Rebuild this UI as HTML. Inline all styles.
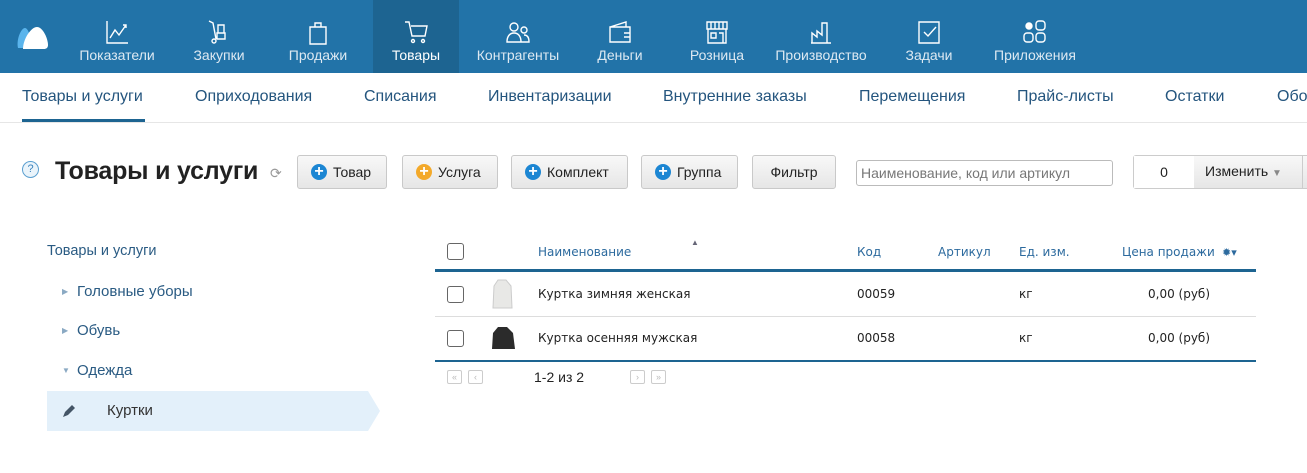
<!DOCTYPE html>
<html><head><meta charset="utf-8"><style>
*{margin:0;padding:0;box-sizing:border-box}
body{width:1307px;height:473px;overflow:hidden;background:#fff;font-family:"Liberation Sans",sans-serif;position:relative}
.a{position:absolute;white-space:nowrap}
#top{position:absolute;left:0;top:0;width:1307px;height:73px;background:#2273a8}
.ni{position:absolute;top:0;height:73px;text-align:center;color:#dde9f2;font-size:14px}
.ni span{position:absolute;left:0;right:0;top:47px}
.ni svg{position:absolute;top:19px;left:50%;margin-left:-13px}
.sub{position:absolute;top:88px;font-size:16px;color:#24557e}
.btn{position:absolute;top:155px;height:34px;border:1px solid #c9c9c9;border-radius:3px;background:linear-gradient(#f8f8f8,#e6e6e6);font-size:14px;color:#222;line-height:32px;display:flex;align-items:center}
.pl{display:inline-block;width:16px;height:16px;border-radius:50%;background:#1c86d3;color:#fff;font-weight:bold;font-size:16px;line-height:16px;text-align:center;margin-right:6px}
.cb{position:absolute;left:447px;width:17px;height:17px;border:1.5px solid #666;border-radius:3px}
.th{position:absolute;top:245px;font-family:"DejaVu Sans",sans-serif;font-size:12px;color:#2c6a9e}
.td{position:absolute;font-family:"DejaVu Sans",sans-serif;font-size:12px;color:#222}
.tr{position:absolute;left:47px;font-size:15px;color:#2a5b83}
.ar{position:absolute;left:62px;color:#8aa9c3;font-size:8px}
.pg{position:absolute;top:370px;width:15px;height:14px;border:1px solid #ccc;border-radius:2px;color:#bbb;font-size:9px;text-align:center;line-height:12px}
</style></head><body>
<div id="top">
<svg class="a" style="left:16px;top:24px" width="34" height="26" viewBox="0 0 34 26"><path d="M2 24C0 16 5 4 9 4c3 0 5 8 5 8L9 24z" fill="#5ab4ec"/><path d="M7 25C7 15 15 3 21 3s11 12 11 18c0 3-2 4-4 4z" fill="#fff"/></svg>
<div class="ni" style="left:76px;width:82px"><svg width="26" height="26" fill="none" stroke="#fff" stroke-width="1.4"><path d="M3 2v22h21M6 19l5-8 4 5 7-10M19 6h3v3"/></svg><span>Показатели</span></div>
<div class="ni" style="left:180px;width:78px"><svg width="26" height="26" fill="none" stroke="#fff" stroke-width="1.4"><path d="M3 2l4 2 3 16M12 6h6v8h-6zM11 14h8v6h-8z"/><circle cx="8" cy="22" r="2"/></svg><span>Закупки</span></div>
<div class="ni" style="left:278px;width:80px"><svg width="26" height="26" fill="none" stroke="#fff" stroke-width="1.4"><path d="M5 8h16v17H5zM10 8V4h6v4"/></svg><span>Продажи</span></div>
<div class="ni" style="left:373px;width:86px;background:#1d6491;color:#fff"><svg width="26" height="26" fill="none" stroke="#fff" stroke-width="1.4"><path d="M2 3h4l3 14h13l2-10H8"/><circle cx="10" cy="22" r="1.5"/><circle cx="20" cy="22" r="1.5"/></svg><span>Товары</span></div>
<div class="ni" style="left:473px;width:90px"><svg width="26" height="26" fill="none" stroke="#fff" stroke-width="1.4"><circle cx="9" cy="8" r="4"/><circle cx="19" cy="11" r="3"/><path d="M2 23c0-6 3-9 7-9s7 3 7 9zM16 23h8c0-5-2-7-5-7"/></svg><span>Контрагенты</span></div>
<div class="ni" style="left:585px;width:70px"><svg width="26" height="26" fill="none" stroke="#fff" stroke-width="1.4"><path d="M3 8h20v15H3zM3 8l16-5v5M17 14h6v4h-6"/></svg><span>Деньги</span></div>
<div class="ni" style="left:682px;width:70px"><svg width="26" height="26" fill="none" stroke="#fff" stroke-width="1.4"><path d="M3 3h20v7H3zM4 10v14h18V10M7 14h5v5H7zM15 14h4v10M7 3v7M11 3v7M15 3v7M19 3v7"/></svg><span>Розница</span></div>
<div class="ni" style="left:771px;width:100px"><svg width="26" height="26" fill="none" stroke="#fff" stroke-width="1.4"><path d="M4 24V14l5 4v-6l5 4V4h5v20zM3 24h20"/></svg><span>Производство</span></div>
<div class="ni" style="left:894px;width:70px"><svg width="26" height="26" fill="none" stroke="#fff" stroke-width="1.4"><path d="M3 3h20v21H3zM8 13l4 4 8-9"/></svg><span>Задачи</span></div>
<div class="ni" style="left:990px;width:90px"><svg width="26" height="26" fill="none" stroke="#fff" stroke-width="1.4"><circle cx="7" cy="7" r="3" fill="#fff"/><rect x="14" y="2" width="9" height="9" rx="3"/><rect x="2" y="14" width="9" height="9" rx="3"/><rect x="14" y="14" width="9" height="9" rx="3"/></svg><span>Приложения</span></div>
</div>
<div class="sub" style="left:22px">Товары и услуги</div>
<div class="a" style="left:22px;top:119px;width:123px;height:3px;background:#1d6491"></div>
<div class="sub" style="left:195px">Оприходования</div>
<div class="sub" style="left:364px">Списания</div>
<div class="sub" style="left:488px">Инвентаризации</div>
<div class="sub" style="left:663px">Внутренние заказы</div>
<div class="sub" style="left:859px">Перемещения</div>
<div class="sub" style="left:1017px">Прайс-листы</div>
<div class="sub" style="left:1165px">Остатки</div>
<div class="sub" style="left:1277px">Обо</div>
<div class="a" style="left:0;top:122px;width:1307px;height:1px;background:#e6e6e6"></div>

<div class="a" style="left:22px;top:161px;width:17px;height:17px;border:1px solid #5b9fd0;border-radius:50%;background:#eaf4fb;color:#3b83bd;font-size:11px;text-align:center;line-height:15px">?</div>
<div class="a" style="left:55px;top:157px;font-size:25px;font-weight:bold;color:#222;letter-spacing:-0.2px">Товары и услуги</div>
<div class="a" style="left:270px;top:165px;color:#999;font-size:14px">⟳</div>
<div class="btn" style="left:297px;width:90px;padding-left:13px"><span class="pl">+</span>Товар</div>
<div class="btn" style="left:402px;width:96px;padding-left:13px"><span class="pl" style="background:#f3a92a">+</span>Услуга</div>
<div class="btn" style="left:511px;width:117px;padding-left:13px"><span class="pl">+</span>Комплект</div>
<div class="btn" style="left:641px;width:97px;padding-left:13px"><span class="pl">+</span>Группа</div>
<div class="btn" style="left:752px;width:84px;justify-content:center">Фильтр</div>
<div class="a" style="left:856px;top:160px;width:257px;height:26px;border:1px solid #bbb;border-radius:3px;font-size:14px;color:#777;padding:4px 4px;line-height:16px">Наименование, код или артикул</div>
<div class="a" style="left:1133px;top:155px;width:180px;height:34px;border:1px solid #ccc;border-radius:3px;background:linear-gradient(#f8f8f8,#e6e6e6)"></div>
<div class="a" style="left:1134px;top:156px;width:60px;height:32px;background:#fff;font-size:14px;line-height:32px;text-align:center;color:#222">0</div>
<div class="a" style="left:1205px;top:163px;font-size:14px;color:#222">Изменить <span style="color:#888;font-size:10px">▼</span></div>
<div class="a" style="left:1302px;top:155px;width:1px;height:34px;background:#ccc"></div>

<div class="tr" style="top:243px;font-size:14.5px">Товары и услуги</div>
<div class="ar" style="top:287px">▶</div><div class="tr" style="left:77px;top:283px">Головные уборы</div>
<div class="ar" style="top:326px">▶</div><div class="tr" style="left:77px;top:322px">Обувь</div>
<div class="ar" style="top:366px">▼</div><div class="tr" style="left:77px;top:362px">Одежда</div>
<svg class="a" style="left:47px;top:391px" width="334" height="40"><path d="M0 0H321L333 20 321 40H0z" fill="#e3f0fa"/><path d="M16 26l2-5 7-7 3 3-7 7z" fill="#456"/></svg>
<div class="tr" style="left:107px;top:402px;color:#333">Куртки</div>

<div class="cb" style="top:243px"></div>
<div class="a" style="left:691px;top:238px;font-size:8px;color:#667">▲</div>
<div class="th" style="left:538px">Наименование</div>
<div class="th" style="left:857px">Код</div>
<div class="th" style="left:938px">Артикул</div>
<div class="th" style="left:1019px">Ед. изм.</div>
<div class="th" style="left:1122px">Цена продажи</div>
<div class="a" style="left:1222px;top:246px;color:#2c6a9e;font-size:11px">✹▾</div>
<div class="a" style="left:435px;top:269px;width:821px;height:3px;background:#1d6491"></div>
<div class="cb" style="top:286px"></div>
<svg class="a" style="left:490px;top:279px" width="24" height="32"><path d="M8 1h8l5 6 1 22H3L4 7z" fill="#e8e8e6" stroke="#ccc"/></svg>
<div class="td" style="left:538px;top:287px">Куртка зимняя женская</div>
<div class="td" style="left:857px;top:287px">00059</div>
<div class="td" style="left:1019px;top:287px">кг</div>
<div class="td" style="left:1148px;top:287px">0,00 (руб)</div>
<div class="a" style="left:435px;top:316px;width:821px;height:1px;background:#ddd"></div>
<div class="cb" style="top:330px"></div>
<svg class="a" style="left:490px;top:325px" width="26" height="27"><path d="M8 2h9l6 6 2 16H2L3 8z" fill="#2b2b2b"/></svg>
<div class="td" style="left:538px;top:331px">Куртка осенняя мужская</div>
<div class="td" style="left:857px;top:331px">00058</div>
<div class="td" style="left:1019px;top:331px">кг</div>
<div class="td" style="left:1148px;top:331px">0,00 (руб)</div>
<div class="a" style="left:435px;top:360px;width:821px;height:2px;background:#1d6491"></div>
<div class="pg" style="left:447px">«</div><div class="pg" style="left:468px">‹</div>
<div class="a" style="left:534px;top:369px;font-size:14px;color:#222">1-2 из 2</div>
<div class="pg" style="left:630px">›</div><div class="pg" style="left:651px">»</div>
</body></html>
